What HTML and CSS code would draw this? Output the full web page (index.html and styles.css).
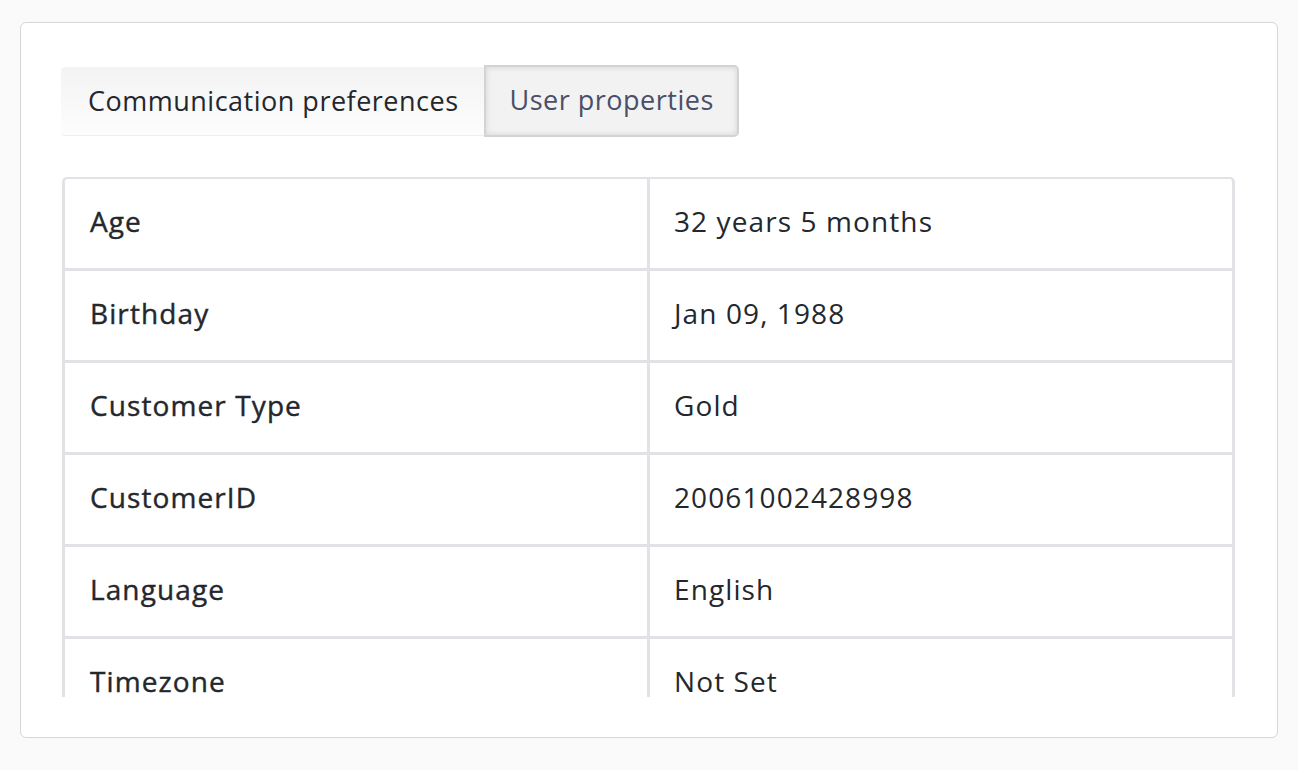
FILE: index.html
```html
<!DOCTYPE html>
<html lang="en">
<head>
  <meta charset="UTF-8">
  <title>User properties</title>
  <link rel="stylesheet" href="styles.css">
</head>
<body>
  <div class="panel">
    <div class="tabs">
      <a href="#" class="tab">Communication preferences</a>
      <a href="#" class="tab active">User properties</a>
    </div>

    <div class="props-scroll">
      <div class="props">
        <div class="row">
          <div class="cell label">Age</div>
          <div class="cell value">32 years 5 months</div>
        </div>
        <div class="row">
          <div class="cell label">Birthday</div>
          <div class="cell value">Jan 09, 1988</div>
        </div>
        <div class="row">
          <div class="cell label">Customer Type</div>
          <div class="cell value">Gold</div>
        </div>
        <div class="row">
          <div class="cell label">CustomerID</div>
          <div class="cell value">20061002428998</div>
        </div>
        <div class="row">
          <div class="cell label">Language</div>
          <div class="cell value">English</div>
        </div>
        <div class="row">
          <div class="cell label">Timezone</div>
          <div class="cell value">Not Set</div>
        </div>
      </div>
    </div>
  </div>
</body>
</html>
```

FILE: styles.css
```css
* {
  margin: 0;
  padding: 0;
  box-sizing: border-box;
}

body {
  font-family: 'Open Sans', 'Lato', sans-serif;
  background: #fafafa;
  color: #24272c;
  padding: 22px 20px 32px 20px;
}

.panel {
  background: #fff;
  border: 1px solid #d6d6da;
  border-radius: 6px;
  padding: 42px 42px 42px 40px;
  height: 716px;
}

.tabs {
  display: flex;
  align-items: center;
  margin-bottom: 40px;
}

.tab {
  display: block;
  font-size: 27px;
  letter-spacing: 0.5px;
  color: #24272c;
  text-decoration: none;
  padding: 0 25px 0 27px;
  line-height: 67px;
  height: 69px;
}

.tab:first-child {
  background: linear-gradient(180deg, #f3f3f3, #fdfdfd);
  border-bottom: 1px solid #efefef;
  border-radius: 4px 0 0 4px;
}

.tab.active {
  color: #4a4e68;
  background: #f2f2f2;
  border: 2px solid #d3d3d5;
  border-radius: 0 5px 5px 0;
  box-shadow: inset 0 0 6px rgba(0, 0, 0, 0.12);
  padding: 0 23px 0 24px;
  height: 72px;
  line-height: 66px;
}

.props-scroll {
  height: 520px;
  overflow: hidden;
}

.props {
  border: 3px solid #e0e2e6;
  border-top-width: 2px;
  border-bottom: none;
  border-radius: 5px 5px 0 0;
  margin-left: 1px;
}

.row {
  display: grid;
  grid-template-columns: 585px 1fr;
  height: 92px;
  border-bottom: 3px solid #e0e2e6;
}

.cell {
  display: flex;
  align-items: center;
  padding-left: 25px;
  padding-bottom: 5px;
  font-size: 28px;
  letter-spacing: 1.1px;
}

.label {
  font-weight: 500;
  letter-spacing: 1.1px;
  -webkit-text-stroke: 0.4px #24272c;
  border-right: 3px solid #e0e2e6;
}

.value {
  padding-left: 24px;
}
```
